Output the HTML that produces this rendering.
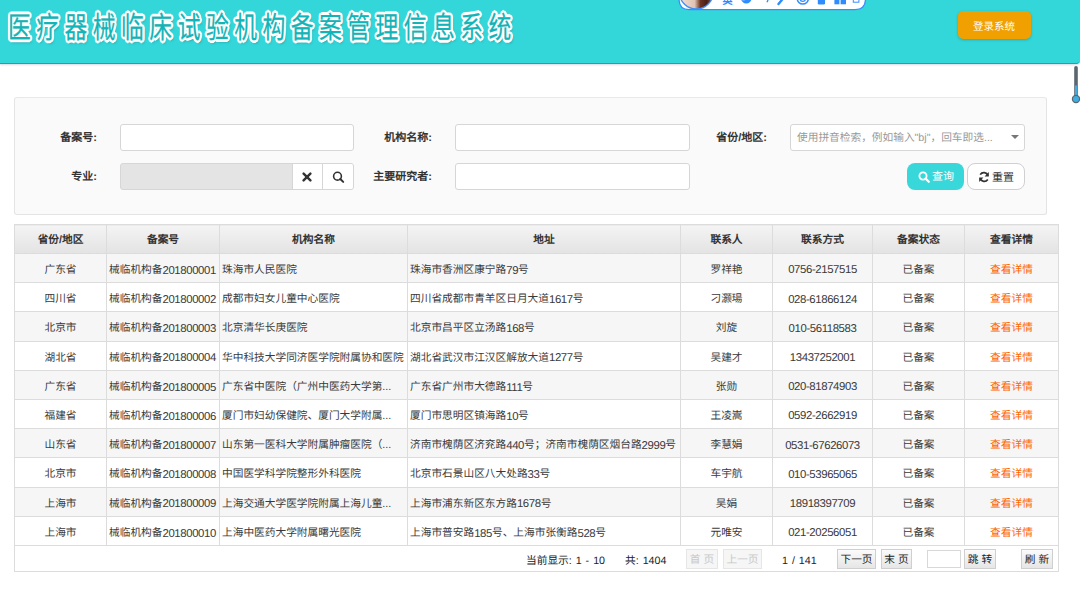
<!DOCTYPE html>
<html lang="zh-CN"><head><meta charset="utf-8">
<style>
*{box-sizing:border-box;margin:0;padding:0}
html,body{text-rendering:geometricPrecision;width:1080px;height:589px;overflow:hidden;background:#fff;font-family:"Liberation Sans",sans-serif;color:#333}
.abs{position:absolute}
#hdr{position:absolute;left:0;top:0;width:1080px;height:64px;background:#33d7d9;border-bottom:1px solid #17a3bf;border-bottom-right-radius:4px;box-shadow:0 1px 2px rgba(40,40,90,.18)}
#title{position:absolute;left:8px;top:14px;font-family:"Liberation Serif",serif;font-weight:normal;font-size:30px;letter-spacing:7.2px;transform:scaleX(0.76);transform-origin:0 0;color:#13b4b7;-webkit-text-stroke:0.25px #13b4b7;white-space:nowrap;line-height:30px;
 text-shadow:2.70px 0.00px 0.7px #fff,2.49px 1.03px 0.7px #fff,1.91px 1.91px 0.7px #fff,1.03px 2.49px 0.7px #fff,0.00px 2.70px 0.7px #fff,-1.03px 2.49px 0.7px #fff,-1.91px 1.91px 0.7px #fff,-2.49px 1.03px 0.7px #fff,-2.70px 0.00px 0.7px #fff,-2.49px -1.03px 0.7px #fff,-1.91px -1.91px 0.7px #fff,-1.03px -2.49px 0.7px #fff,-0.00px -2.70px 0.7px #fff,1.03px -2.49px 0.7px #fff,1.91px -1.91px 0.7px #fff,2.49px -1.03px 0.7px #fff,2px 3px 3px rgba(0,50,60,.4)}
#login{position:absolute;left:958px;top:11px;width:73px;height:28px;background:#f0a000;border-radius:5px;color:#fff;font-size:10.5px;line-height:28px;padding-top:2px;padding-right:1px;text-align:center;box-shadow:0 1px 3px rgba(0,0,0,.2)}
#panel{position:absolute;left:14px;top:97px;width:1033px;height:118px;background:#fafafa;border:1px solid #e4e4e4;border-top-color:#e8e8e8;border-radius:3px}
.lbl{position:absolute;margin-top:0.7px;font-size:11px;font-weight:bold;color:#333;text-align:right;line-height:14px;white-space:nowrap}
.inp{position:absolute;height:27px;background:#fff;border:1px solid #d6d6d6;border-radius:3px}
.btn{position:absolute;height:27px;border-radius:8px;font-size:11px;line-height:24px;text-align:center;padding-top:1.5px}
table{position:absolute;left:14px;top:224px;width:1044px;border-collapse:collapse;table-layout:fixed;font-size:10.7px}
td,th{border:1px solid #dcdcdc;height:29.2px;padding:3px 2px 0;white-space:nowrap;overflow:hidden}
th{background:linear-gradient(#f4f4f4,#e3e3e3);font-weight:bold;color:#333;height:29px;padding:0.5px 2px 0}
tr.g td{background:#f6f6f6}
td{font-weight:300;color:#3a3a3a}
td.c{text-align:center}
.n{font-size:11.4px;letter-spacing:-0.4px;position:relative;top:0.8px}
td.o{color:#ff6200;text-align:center}
.pt{position:absolute;top:552.5px;word-spacing:1px;font-weight:300;font-size:10.7px;line-height:16px;color:#222;white-space:nowrap}
.pb{position:absolute;top:549px;font-weight:300;height:20px;border:1px solid #cfcfcf;background:linear-gradient(#fbfbfb,#e6e6e6);font-size:10.7px;line-height:17px;padding-top:1.5px;text-align:center;color:#222;white-space:nowrap}
.pb.dis{color:#c8c8c8;border-color:#e6e6e6;background:#f6f6f6}
</style></head><body>
<div id="hdr"></div>
<div id="title">医疗器械临床试验机构备案管理信息系统</div>
<div id="login">登录系统</div>
<svg id="ime" class="abs" style="left:676px;top:0" width="194" height="13" viewBox="0 0 194 13">
 <path d="M3 -12 L3 -1 Q3 9.6 13 9.6 L179 9.6 Q189.5 9.6 189.5 -1 L189.5 -12" fill="#fff" stroke="#3d8cff" stroke-width="1.3"/>
 <defs><linearGradient id="av" x1="0" x2="1" y1="0" y2="0"><stop offset="0" stop-color="#f2e2d8"/><stop offset="0.45" stop-color="#e0c4b4"/><stop offset="0.62" stop-color="#6b3420"/><stop offset="0.8" stop-color="#4a1f14"/><stop offset="1" stop-color="#8a5a48"/></linearGradient></defs>
 <circle cx="20.3" cy="-8" r="17" fill="url(#av)" stroke="#3d8cff" stroke-width="1.3"/>
 <text x="46.5" y="3.5" font-size="10" fill="#2f8cff" font-weight="bold" font-family="Liberation Sans,sans-serif">英</text>
 <circle cx="70.3" cy="-1.6" r="5.2" fill="#2f8cff"/><circle cx="67.6" cy="-4.6" r="4.9" fill="#fff"/>
 <path d="M92.8 -2 L91 2.2" stroke="#2f8cff" stroke-width="1.3"/>
 <path d="M107.5 -2 L102.5 4" stroke="#2f8cff" stroke-width="2.4" stroke-linecap="round"/>
 <circle cx="126.8" cy="-1.5" r="5.6" fill="none" stroke="#2f8cff" stroke-width="1.5"/><circle cx="126.8" cy="-1.5" r="2.8" fill="none" stroke="#2f8cff" stroke-width="1.3"/>
 <rect x="141.8" y="-4" width="7.2" height="8.4" rx="1.2" fill="#2f8cff"/>
 <rect x="158.4" y="-4" width="5" height="8.3" fill="#2f8cff"/><rect x="164.6" y="-4" width="5.4" height="8.3" fill="#2f8cff"/>
 <rect x="177.3" y="-4" width="5.6" height="6.2" fill="none" stroke="#3d8cff" stroke-width="1"/>
</svg>
<svg class="abs" style="left:1070px;top:64px" width="10" height="42" viewBox="0 0 10 42">
 <rect x="4.2" y="2" width="3.6" height="34" rx="1.8" fill="#5b6670"/>
 <rect x="5" y="21.5" width="2" height="14.5" fill="#3eaee2"/>
 <circle cx="6" cy="35" r="3.6" fill="#3eaee2" stroke="#5b6670" stroke-width="1.2"/>
</svg>

<div id="panel"></div>
<div class="lbl" style="left:40px;top:130px;width:57px">备案号:</div>
<div class="inp" style="left:120px;top:124px;width:234px"></div>
<div class="lbl" style="left:360px;top:130px;width:72px">机构名称:</div>
<div class="inp" style="left:455px;top:124px;width:235px"></div>
<div class="lbl" style="left:700px;top:130px;width:67px">省份/地区:</div>
<div class="inp" style="left:790px;top:124px;width:235px"><div class="abs" style="left:6px;top:5.5px;font-size:10.7px;line-height:14px;color:#999;white-space:nowrap">使用拼音检索，例如输入"bj"，回车即选...</div><div class="abs" style="left:220px;top:10px;width:0;height:0;border-left:4px solid transparent;border-right:4px solid transparent;border-top:4px solid #777"></div></div>

<div class="lbl" style="left:40px;top:169px;width:57px">专业:</div>
<div class="inp" style="left:120px;top:163px;width:234px;background:#e4e4e4;overflow:hidden">
 <div class="abs" style="left:170.7px;top:-1px;width:31px;height:27px;background:#fff;border-left:1px solid #d6d6d6;border-right:1px solid #d6d6d6"></div>
 <div class="abs" style="left:201.7px;top:-1px;width:32px;height:27px;background:#fff"></div>
 <svg class="abs" style="left:180.7px;top:7.8px" width="10" height="10" viewBox="0 0 10 10"><path d="M1.6 1.6L8.4 8.4M8.4 1.6L1.6 8.4" stroke="#333" stroke-width="2.4" stroke-linecap="round"/></svg>
 <svg class="abs" style="left:210.5px;top:6.5px" width="13" height="13" viewBox="0 0 13 13"><circle cx="5.5" cy="5.2" r="3.9" fill="none" stroke="#333" stroke-width="1.6"/><path d="M8.3 8L11.2 10.9" stroke="#333" stroke-width="2" stroke-linecap="round"/></svg>
</div>
<div class="lbl" style="left:360px;top:169px;width:72px">主要研究者:</div>
<div class="inp" style="left:455px;top:163px;width:235px"></div>
<div class="btn" style="left:907px;top:163px;width:57px;background:#38d7d9;color:#fff;padding-left:15px"><svg class="abs" style="left:10.5px;top:7.5px" width="12" height="12" viewBox="0 0 12 12"><circle cx="5" cy="5" r="3.6" fill="none" stroke="#fff" stroke-width="1.8"/><path d="M7.6 7.6L10.8 10.8" stroke="#fff" stroke-width="2.2" stroke-linecap="round"/></svg>查询</div>
<div class="btn" style="left:967px;top:163px;width:58px;background:#fff;border:1px solid #d0d0d0;color:#333;padding-left:14px"><svg class="abs" style="left:10px;top:7px" width="12" height="12" viewBox="0 0 12 12"><path d="M10 4.6A4.4 4.4 0 0 0 2.2 3.6M2 7.4A4.4 4.4 0 0 0 9.8 8.4" fill="none" stroke="#333" stroke-width="1.7"/><path d="M10.8 1L10.8 5.4L6.6 5.4Z M1.2 11L1.2 6.6L5.4 6.6Z" fill="#333"/></svg>重置</div>

<table>
<colgroup><col style="width:92px"><col style="width:113px"><col style="width:188px"><col style="width:273px"><col style="width:92px"><col style="width:100px"><col style="width:92px"><col style="width:94px"></colgroup>
<tr><th>省份/地区</th><th>备案号</th><th>机构名称</th><th>地址</th><th>联系人</th><th>联系方式</th><th>备案状态</th><th>查看详情</th></tr>
<tr class="g"><td class="c">广东省</td><td>械临机构备<span class="n">201800001</span></td><td>珠海市人民医院</td><td>珠海市香洲区康宁路<span class="n">79</span>号</td><td class="c">罗祥艳</td><td class="c"><span class="n">0756-2157515</span></td><td class="c">已备案</td><td class="o">查看详情</td></tr>
<tr><td class="c">四川省</td><td>械临机构备<span class="n">201800002</span></td><td>成都市妇女儿童中心医院</td><td>四川省成都市青羊区日月大道<span class="n">1617</span>号</td><td class="c">刁灏瑒</td><td class="c"><span class="n">028-61866124</span></td><td class="c">已备案</td><td class="o">查看详情</td></tr>
<tr class="g"><td class="c">北京市</td><td>械临机构备<span class="n">201800003</span></td><td>北京清华长庚医院</td><td>北京市昌平区立汤路<span class="n">168</span>号</td><td class="c">刘旋</td><td class="c"><span class="n">010-56118583</span></td><td class="c">已备案</td><td class="o">查看详情</td></tr>
<tr><td class="c">湖北省</td><td>械临机构备<span class="n">201800004</span></td><td>华中科技大学同济医学院附属协和医院</td><td>湖北省武汉市江汉区解放大道<span class="n">1277</span>号</td><td class="c">吴建才</td><td class="c"><span class="n">13437252001</span></td><td class="c">已备案</td><td class="o">查看详情</td></tr>
<tr class="g"><td class="c">广东省</td><td>械临机构备<span class="n">201800005</span></td><td>广东省中医院（广州中医药大学第...</td><td>广东省广州市大德路<span class="n">111</span>号</td><td class="c">张勋</td><td class="c"><span class="n">020-81874903</span></td><td class="c">已备案</td><td class="o">查看详情</td></tr>
<tr><td class="c">福建省</td><td>械临机构备<span class="n">201800006</span></td><td>厦门市妇幼保健院、厦门大学附属...</td><td>厦门市思明区镇海路<span class="n">10</span>号</td><td class="c">王凌嵩</td><td class="c"><span class="n">0592-2662919</span></td><td class="c">已备案</td><td class="o">查看详情</td></tr>
<tr class="g"><td class="c">山东省</td><td>械临机构备<span class="n">201800007</span></td><td>山东第一医科大学附属肿瘤医院（...</td><td>济南市槐荫区济兖路<span class="n">440</span>号；济南市槐荫区烟台路<span class="n">2999</span>号</td><td class="c">李慧娟</td><td class="c"><span class="n">0531-67626073</span></td><td class="c">已备案</td><td class="o">查看详情</td></tr>
<tr><td class="c">北京市</td><td>械临机构备<span class="n">201800008</span></td><td>中国医学科学院整形外科医院</td><td>北京市石景山区八大处路<span class="n">33</span>号</td><td class="c">车宇航</td><td class="c"><span class="n">010-53965065</span></td><td class="c">已备案</td><td class="o">查看详情</td></tr>
<tr class="g"><td class="c">上海市</td><td>械临机构备<span class="n">201800009</span></td><td>上海交通大学医学院附属上海儿童...</td><td>上海市浦东新区东方路<span class="n">1678</span>号</td><td class="c">吴娟</td><td class="c"><span class="n">18918397709</span></td><td class="c">已备案</td><td class="o">查看详情</td></tr>
<tr><td class="c">上海市</td><td>械临机构备<span class="n">201800010</span></td><td>上海中医药大学附属曙光医院</td><td>上海市普安路<span class="n">185</span>号、上海市张衡路<span class="n">528</span>号</td><td class="c">元唯安</td><td class="c"><span class="n">021-20256051</span></td><td class="c">已备案</td><td class="o">查看详情</td></tr>
</table>
<div id="pager" class="abs" style="left:14px;top:545px;width:1045px;height:27px;border:1px solid #dcdcdc;border-top:none;font-size:10.7px"></div>
<div class="pt" style="left:526px">当前显示: 1 - 10</div>
<div class="pt" style="left:625px">共: 1404</div>
<div class="pb dis" style="left:686px;width:32px">首 页</div>
<div class="pb dis" style="left:723px;width:39px">上一页</div>
<div class="pt" style="left:782px">1 / 141</div>
<div class="pb" style="left:837px;width:39px">下一页</div>
<div class="pb" style="left:881px;width:31px">末 页</div>
<div class="abs" style="left:927px;top:550px;width:34px;height:18px;border:1px solid #d8d8d8;background:#fff"></div>
<div class="pb" style="left:964px;width:32px">跳 转</div>
<div class="pb" style="left:1021px;width:32px">刷 新</div>
</body></html>
